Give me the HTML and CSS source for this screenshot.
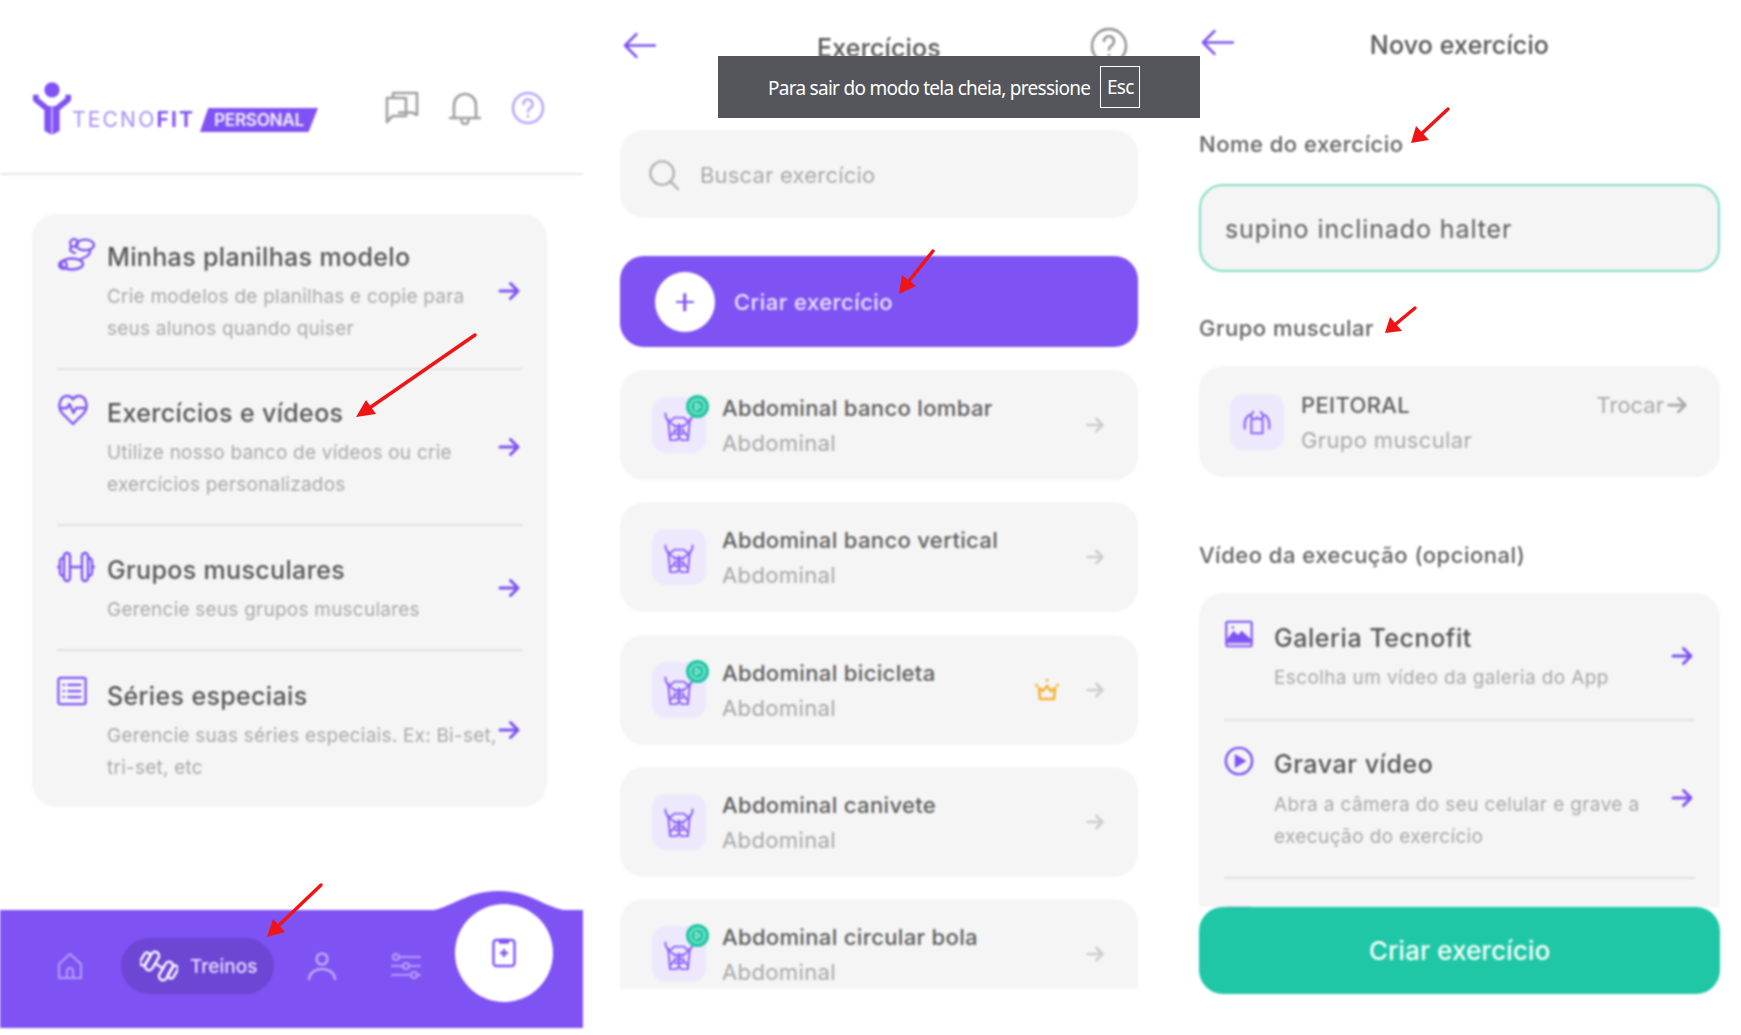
FILE: index.html
```html
<!DOCTYPE html>
<html lang="pt-BR">
<head>
  <meta charset="UTF-8">
  <title>Tecnofit Personal - Exercícios</title>
  <link rel="stylesheet" href="styles.css">
</head>
<body>

  <!-- Ícones repetidos -->
  <svg class="sprite" xmlns="http://www.w3.org/2000/svg">
    <symbol id="i-seta" viewBox="0 0 24 24">
      <path d="M3 12h18M13.500 4.500 21 12l-7.500 7.500" fill="none" stroke="currentColor" stroke-width="3" stroke-linecap="round" stroke-linejoin="round"/>
    </symbol>
    <symbol id="i-abdomen" viewBox="0 0 32 32">
      <g fill="none" stroke="currentColor" stroke-width="2.100" stroke-linecap="round" stroke-linejoin="round">
        <path d="M1.500 1.500c0 4 1.500 7 4.500 9M30.500 1.500c0 4-1.500 7-4.500 9"/>
        <path d="M6 10.500 11 6h10l5 4.500M4.500 8 6.500 30h7l2.500-3 2.500 3h7L27.500 8"/>
        <path d="M7 12l9 5 9-5M6.500 26l5.500-6M25.500 26 20 20M16 13v13M11 15.500h10M11 19.500h10M12 23.500h8"/>
      </g>
    </symbol>
    <symbol id="i-play" viewBox="0 0 24 24">
      <circle cx="12" cy="12" r="12" fill="#22c7a5"/>
      <circle cx="12" cy="12" r="7.500" fill="none" stroke="#b7eee0" stroke-width="1.300"/>
      <path d="M10 8.500l5 3.500-5 3.500z" fill="none" stroke="#b7eee0" stroke-width="1.300" stroke-linejoin="round"/>
    </symbol>
  </svg>

  <div class="page">

    <!-- Menu -->
    <section class="panel panel-menu">
      <header class="topo">
        <div class="logo">
          <svg class="logo-figura" viewBox="0 0 42 56">
            <circle cx="21" cy="9" r="8" fill="#7f52f3"/>
            <path d="M4 14v5l11 9" fill="none" stroke="#7f52f3" stroke-width="6" stroke-linejoin="round"/>
            <path d="M38 14v5l-11 9" fill="none" stroke="#7f52f3" stroke-width="6" stroke-linejoin="round"/>
            <path d="M13 26h7.500v30L13 52zM21.500 26H29v26l-7.500 4z" fill="#7f52f3"/>
          </svg>
          <span class="logo-nome">TECNO<b>FIT</b></span>
          <span class="logo-selo">PERSONAL</span>
        </div>
        <div class="topo-acoes">
          <svg class="topo-icone" viewBox="0 0 34 34" fill="none" stroke="#a0a0a0" stroke-width="2.600" stroke-linejoin="round">
            <path d="M8 7V2h24v22l-5-2.500H13"/>
            <path d="M2 7h19v18H7.500L2 31z"/>
          </svg>
          <svg class="topo-icone" viewBox="0 0 34 34" fill="none" stroke="#a0a0a0" stroke-width="2.600" stroke-linecap="round" stroke-linejoin="round">
            <path d="M6 26V14a11 11 0 0 1 22 0v12"/>
            <path d="M2 27h30M13.500 29.500a3.500 3.500 0 0 0 7 0"/>
          </svg>
          <svg class="topo-icone" viewBox="0 0 34 34" fill="none" stroke="#bba6f8" stroke-width="2.600" stroke-linecap="round">
            <circle cx="17" cy="17" r="15"/>
            <path d="M12.500 13a4.500 4.500 0 1 1 6.500 4c-1.500.8-2 1.800-2 3.500M17 25v.5"/>
          </svg>
        </div>
      </header>

      <div class="card opcoes">
        <a class="opcao">
          <svg class="opcao-icone" viewBox="0 0 38 34" fill="none" stroke="#7f52f3" stroke-width="2.300" stroke-linecap="round">
            <circle cx="17" cy="6" r="3.800"/>
            <ellipse cx="28" cy="8" rx="9" ry="5.300"/>
            <circle cx="6" cy="28" r="3.800"/>
            <ellipse cx="15" cy="27" rx="11" ry="5.500"/>
            <path d="M33 13c1 5-4 7-9 9M14 10c-2 3 0 5 4 6"/>
          </svg>
          <div class="opcao-texto">
            <h3>Minhas planilhas modelo</h3>
            <p>Crie modelos de planilhas e copie para seus alunos quando quiser</p>
          </div>
          <svg class="seta seta-roxa"><use href="#i-seta"/></svg>
        </a>
        <a class="opcao">
          <svg class="opcao-icone" viewBox="0 0 38 34" fill="none" stroke="#7f52f3" stroke-width="2.400" stroke-linecap="round" stroke-linejoin="round">
            <path d="M15 31 4 20C-1 14 2 3 9 3c3 0 5 1.500 6 3.500C16 4.500 18 3 21 3c7 0 10 11 5 17z" transform="translate(1)"/>
            <path d="M3 15h7l2.500-4 4 9 2.500-5h9"/>
          </svg>
          <div class="opcao-texto">
            <h3>Exercícios e vídeos</h3>
            <p>Utilize nosso banco de vídeos ou crie exercícios personalizados</p>
          </div>
          <svg class="seta seta-roxa"><use href="#i-seta"/></svg>
        </a>
        <a class="opcao opcao-curta">
          <svg class="opcao-icone" viewBox="0 0 38 34" fill="none" stroke="#7f52f3" stroke-width="2.400" stroke-linecap="round" stroke-linejoin="round">
            <rect x="7" y="3" width="6" height="28" rx="3"/>
            <rect x="25" y="3" width="6" height="28" rx="3"/>
            <path d="M13 17h12M7 8C3 8 3 10 3 12v10c0 2 0 4 4 4M31 8c4 0 4 2 4 4v10c0 2 0 4-4 4M1 17h2M35 17h2"/>
          </svg>
          <div class="opcao-texto">
            <h3>Grupos musculares</h3>
            <p>Gerencie seus grupos musculares</p>
          </div>
          <svg class="seta seta-roxa"><use href="#i-seta"/></svg>
        </a>
        <a class="opcao">
          <svg class="opcao-icone icone-menor" viewBox="0 0 32 32" fill="none" stroke="#7f52f3" stroke-width="2.400" stroke-linecap="round">
            <rect x="1.500" y="2" width="29" height="28" rx="2"/>
            <path d="M12 9.500h13M12 16h13M12 22.500h13M7 9.500h.5M7 16h.5M7 22.500h.5"/>
          </svg>
          <div class="opcao-texto">
            <h3>Séries especiais</h3>
            <p>Gerencie suas séries especiais. Ex: Bi-set, tri-set, etc</p>
          </div>
          <svg class="seta seta-roxa"><use href="#i-seta"/></svg>
        </a>
      </div>

      <nav class="menu-baixo">
        <svg class="menu-onda" viewBox="0 0 170 22" preserveAspectRatio="none">
          <path d="M0 22C35 22 45 1 84 1c38 0 46 21 86 21z" fill="#7f52f3"/>
        </svg>
        <svg class="menu-icone" viewBox="0 0 28 28" fill="none" stroke="#b49ef8" stroke-width="2" stroke-linejoin="round">
          <path d="M3 12 14 2l11 10v14H3zM11 26v-7a3 3 0 0 1 6 0v7"/>
        </svg>
        <div class="menu-ativo">
          <svg class="menu-halter" viewBox="0 0 38 32" fill="none" stroke="#fff" stroke-width="2.400" stroke-linejoin="round">
            <rect x="8" y="1" width="8" height="20" rx="4" transform="rotate(30 12 11)"/>
            <rect x="2" y="2" width="6" height="14" rx="3" transform="rotate(30 5 9)"/>
            <rect x="22" y="11" width="8" height="20" rx="4" transform="rotate(30 26 21)"/>
            <rect x="30" y="15" width="6" height="14" rx="3" transform="rotate(30 33 22)"/>
            <path d="M16 14l8 5"/>
          </svg>
          <span>Treinos</span>
        </div>
        <svg class="menu-icone" viewBox="0 0 28 28" fill="none" stroke="#c5b5fa" stroke-width="2.200" stroke-linecap="round">
          <circle cx="14" cy="7" r="5.500"/>
          <path d="M1 28c0-7 6-11 13-11s13 4 13 11"/>
        </svg>
        <svg class="menu-icone menu-ajustes" viewBox="0 0 30 28" fill="none" stroke="#b49ef8" stroke-width="2.200" stroke-linecap="round">
          <path d="M9 5h20M1 14h11M18 14h11M1 23h19M26 23h3"/>
          <circle cx="5" cy="5" r="3"/><circle cx="15" cy="14" r="3"/><circle cx="23" cy="23" r="3"/>
        </svg>
        <div class="menu-circulo">
          <svg class="menu-prancheta" viewBox="0 0 24 30" fill="none" stroke="#7f52f3" stroke-width="2.400" stroke-linejoin="round">
            <rect x="1.500" y="2" width="21" height="26" rx="3"/>
            <path d="M8 2h8v2.500H8zM12 11v8M8 15h8"/>
          </svg>
        </div>
      </nav>
    </section>

    <!-- Lista de exercícios -->
    <section class="panel panel-lista">
      <header class="barra barra-lista">
        <svg class="voltar" viewBox="0 0 32 26"><path d="M31 13H2M13 2 2 13l11 11" fill="none" stroke="#7f52f3" stroke-width="2.600" stroke-linecap="round" stroke-linejoin="round"/></svg>
        <h2>Exercícios</h2>
        <svg class="ajuda" viewBox="0 0 38 38" fill="none" stroke="#8f8f8f" stroke-width="2.400" stroke-linecap="round">
          <circle cx="19" cy="19" r="17"/>
          <path d="M14 14a5 5 0 1 1 7.500 4.500C20 19.500 19 20.500 19 22.500M19 28v.5"/>
        </svg>
      </header>

      <div class="busca">
        <svg class="busca-icone" viewBox="0 0 34 34" fill="none" stroke="#b4b4b4" stroke-width="2.600" stroke-linecap="round">
          <circle cx="15" cy="15" r="12.500"/><path d="M24 24l8 8"/>
        </svg>
        <span>Buscar exercício</span>
      </div>

      <div class="criar">
        <span class="criar-mais"></span>
        <span>Criar exercício</span>
      </div>

      <div class="lista">
        <div class="item">
          <div class="item-icone">
            <svg class="abdomen"><use href="#i-abdomen"/></svg>
            <svg class="selo-play"><use href="#i-play"/></svg>
          </div>
          <div class="item-texto"><h4>Abdominal banco lombar</h4><p>Abdominal</p></div>
          <svg class="seta seta-cinza"><use href="#i-seta"/></svg>
        </div>
        <div class="item">
          <div class="item-icone">
            <svg class="abdomen"><use href="#i-abdomen"/></svg>
          </div>
          <div class="item-texto"><h4>Abdominal banco vertical</h4><p>Abdominal</p></div>
          <svg class="seta seta-cinza"><use href="#i-seta"/></svg>
        </div>
        <div class="item">
          <div class="item-icone">
            <svg class="abdomen"><use href="#i-abdomen"/></svg>
            <svg class="selo-play"><use href="#i-play"/></svg>
          </div>
          <div class="item-texto"><h4>Abdominal bicicleta</h4><p>Abdominal</p></div>
          <svg class="coroa" viewBox="0 0 24 22" fill="none" stroke="#f7b233" stroke-width="2.600" stroke-linejoin="round">
            <path d="M4 9l4 3 4-5 4 5 4-3-1 11H5z"/>
            <path d="M12 1v.8M1.500 6v.8M22.500 6v.8" stroke-linecap="round"/>
          </svg>
          <svg class="seta seta-cinza"><use href="#i-seta"/></svg>
        </div>
        <div class="item">
          <div class="item-icone">
            <svg class="abdomen"><use href="#i-abdomen"/></svg>
          </div>
          <div class="item-texto"><h4>Abdominal canivete</h4><p>Abdominal</p></div>
          <svg class="seta seta-cinza"><use href="#i-seta"/></svg>
        </div>
        <div class="item">
          <div class="item-icone">
            <svg class="abdomen"><use href="#i-abdomen"/></svg>
            <svg class="selo-play"><use href="#i-play"/></svg>
          </div>
          <div class="item-texto"><h4>Abdominal circular bola</h4><p>Abdominal</p></div>
          <svg class="seta seta-cinza"><use href="#i-seta"/></svg>
        </div>
      </div>
    </section>

    <!-- Novo exercício -->
    <section class="panel panel-novo">
      <header class="barra barra-novo">
        <svg class="voltar" viewBox="0 0 32 26"><path d="M31 13H2M13 2 2 13l11 11" fill="none" stroke="#7f52f3" stroke-width="2.600" stroke-linecap="round" stroke-linejoin="round"/></svg>
        <h2>Novo exercício</h2>
      </header>

      <label class="rotulo rotulo-nome">Nome do exercício</label>
      <div class="campo">supino inclinado halter</div>

      <label class="rotulo rotulo-grupo">Grupo muscular</label>
      <div class="grupo">
        <div class="item-icone">
          <svg class="peitoral" viewBox="0 0 32 32" fill="none" stroke="#8a63f5" stroke-width="2.200" stroke-linecap="round" stroke-linejoin="round">
            <path d="M3 22C2 13 5 8 10 7l2-3M29 22c1-9-2-14-7-15l-2-3"/>
            <path d="M9 8c2 5 5 5 7 2 2 3 5 3 7-2M10 13v14h12V13"/>
          </svg>
        </div>
        <div class="item-texto"><h4>PEITORAL</h4><p>Grupo muscular</p></div>
        <div class="trocar">Trocar<svg class="seta seta-trocar"><use href="#i-seta"/></svg></div>
      </div>

      <label class="rotulo rotulo-video">Vídeo da execução (opcional)</label>
      <div class="card opcoes opcoes-video">
        <a class="opcao">
          <svg class="opcao-icone icone-menor" viewBox="0 0 32 32" fill="none" stroke="#7f52f3" stroke-width="2.400">
            <rect x="1.500" y="2" width="29" height="28" rx="1.500"/>
            <path d="M3 23l7-9 5 5 4-5 10 9z" fill="#7f52f3"/>
            <path d="M2 25.500h28"/>
            <circle cx="9" cy="8.500" r="1.400" fill="#7f52f3" stroke="none"/>
          </svg>
          <div class="opcao-texto">
            <h3>Galeria Tecnofit</h3>
            <p>Escolha um vídeo da galeria do App</p>
          </div>
          <svg class="seta seta-roxa"><use href="#i-seta"/></svg>
        </a>
        <a class="opcao opcao-gravar">
          <svg class="opcao-icone icone-menor" viewBox="0 0 32 32">
            <circle cx="16" cy="16" r="14" fill="none" stroke="#7f52f3" stroke-width="2.600"/>
            <path d="M11.500 8.500 24 16l-12.500 7.500z" fill="#7f52f3"/>
          </svg>
          <div class="opcao-texto">
            <h3>Gravar vídeo</h3>
            <p>Abra a câmera do seu celular e grave a execução do exercício</p>
          </div>
          <svg class="seta seta-roxa"><use href="#i-seta"/></svg>
        </a>
        <a class="opcao">
          <svg class="opcao-icone icone-menor" viewBox="0 0 32 32" fill="none" stroke="#7f52f3" stroke-width="2.400">
            <rect x="1.500" y="2" width="29" height="28" rx="1.500"/>
          </svg>
        </a>
      </div>
      <div class="botao-criar">Criar exercício</div>
    </section>

    <!-- Aviso de tela cheia -->
    <div class="aviso">
      <span>Para sair do modo tela cheia, pressione</span>
      <kbd>Esc</kbd>
    </div>

    <!-- Setas vermelhas de anotação -->
    <svg class="anotacoes" viewBox="0 0 1741 1035">
      <g fill="none" stroke="#f01414" stroke-width="3.500" stroke-linecap="round">
        <path d="M475 335 368 409"/>
        <path d="M321 885 275 929"/>
        <path d="M933 251 905 286"/>
        <path d="M1448 109 1418 137"/>
        <path d="M1415 308 1391 328"/>
      </g>
      <g fill="#f01414">
        <path d="M356 417 366 400 376 414z"/>
        <path d="M267 937 273 919 285 932z"/>
        <path d="M899 294 902 275 916 286z"/>
        <path d="M1411 143 1416 126 1429 140z"/>
        <path d="M1385 333 1390 317 1402 331z"/>
      </g>
    </svg>
  </div>

</body>
</html>
```

FILE: styles.css
```css
* {
  box-sizing: border-box;
}

body {
  margin: 0;
  background-color: #ffffff;
  font-family: Inter, "Noto Sans", sans-serif;
  color: #565656;
  overflow: hidden;
}

h2, h3, h4, p {
  margin: 0;
}

.sprite {
  display: none;
}

.page {
  position: relative;
  display: flex;
  width: 1741px;
  height: 1035px;
  overflow: hidden;
}

.panel {
  display: flex;
  flex-direction: column;
  filter: blur(0.8px);
}

/* Painel 1 */
.panel-menu {
  width: 583px;
  height: 1028px;
}

.panel-lista {
  width: 518px;
  margin-left: 37px;
}

.panel-novo {
  width: 521px;
  margin-left: 61px;
}

.topo {
  display: flex;
  justify-content: space-between;
  align-items: flex-start;
  height: 175px;
  padding: 81px 38px 0 32px;
  border-bottom: 2px solid #e8e8e8;
}

.logo {
  display: flex;
  align-items: flex-end;
  height: 54px;
}

.logo-figura {
  width: 40px;
  height: 54px;
}

.logo-nome {
  width: 128px;
  margin-bottom: 3px;
  font-size: 21px;
  line-height: 25px;
  letter-spacing: 2.2px;
  color: #a68bf6;
}

.logo-nome b {
  color: #7f52f3;
  font-weight: 700;
}

.logo-selo {
  width: 118px;
  height: 24px;
  margin-bottom: 3px;
  background-color: #7f52f3;
  clip-path: polygon(7% 0, 100% 0, 92% 100%, 0 100%);
  color: #f1edff;
  font-size: 17px;
  font-weight: 600;
  line-height: 24px;
  letter-spacing: -0.2px;
  text-align: center;
}

.topo-acoes {
  display: flex;
  gap: 29px;
  margin-top: 10px;
}

.topo-icone {
  width: 34px;
  height: 34px;
}

.card {
  background-color: #f5f5f5;
  border-radius: 24px;
}

.opcoes {
  margin: 39px 36px 0 32px;
  padding: 0 25px;
}

.opcao {
  display: grid;
  grid-template-columns: 50px 1fr 25px;
  padding: 26px 0 23px;
  border-bottom: 2px solid #e0e0e0;
}

.opcao:last-child {
  padding-top: 28px;
  border-bottom: none;
}

.opcao-curta {
  padding: 27px 0 23px;
}

.opcao-curta h3 {
  margin-bottom: 8px;
}

.opcao-icone {
  width: 38px;
  height: 34px;
  margin-top: -3px;
}

.icone-menor {
  width: 30px;
  height: 30px;
}

.opcao-texto h3 {
  font-size: 25px;
  font-weight: 500;
  line-height: 34px;
  letter-spacing: 0.35px;
  margin-bottom: 7px;
}

.opcao-texto p {
  font-size: 19px;
  line-height: 32px;
  letter-spacing: 0.23px;
  color: #a8a8a8;
}

.seta {
  width: 24px;
  height: 24px;
  align-self: center;
}

.seta-roxa {
  margin-bottom: 4px;
  color: #7f52f3;
}

.seta-cinza {
  width: 20px;
  height: 20px;
  color: #cdcdcd;
}

.menu-baixo {
  position: relative;
  display: flex;
  align-items: center;
  gap: 34px;
  height: 118px;
  margin-top: auto;
  padding: 0 0 6px 56px;
  background-color: #7f52f3;
}

.menu-onda {
  position: absolute;
  right: 0;
  top: -20px;
  width: 166px;
  height: 22px;
}

.menu-icone {
  width: 28px;
  height: 28px;
}

.menu-ajustes {
  width: 30px;
  margin-left: 21px;
}

.menu-ativo {
  display: flex;
  align-items: center;
  gap: 12px;
  width: 153px;
  height: 56px;
  margin-left: 3px;
  padding-left: 19px;
  background-color: #6d46d4;
  border-radius: 28px;
  color: #e6deff;
  font-size: 19px;
  font-weight: 500;
}

.menu-halter {
  width: 38px;
  height: 32px;
}

.menu-circulo {
  position: absolute;
  left: 455px;
  top: -6px;
  display: flex;
  justify-content: center;
  align-items: center;
  width: 98px;
  height: 98px;
  background-color: #ffffff;
  border-radius: 50%;
}

.menu-prancheta {
  width: 24px;
  height: 30px;
}

/* Cabeçalho dos painéis 2 e 3 */
.barra {
  position: relative;
  display: flex;
  align-items: center;
  justify-content: center;
}

.barra h2 {
  font-size: 25px;
  font-weight: 500;
  letter-spacing: 0.15px;
}

.barra-lista {
  height: 96px;
}

.barra-novo {
  height: 90px;
}

.voltar {
  position: absolute;
  left: 3px;
  top: 32px;
  width: 33px;
  height: 27px;
}

.barra-novo .voltar {
  top: 29px;
  left: 2px;
}

.ajuda {
  position: absolute;
  right: 10px;
  top: 27px;
  width: 38px;
  height: 38px;
}

/* Painel 2 */
.busca {
  display: flex;
  align-items: center;
  gap: 20px;
  height: 88px;
  margin-top: 34px;
  padding: 2px 0 0 28px;
  background-color: #f5f5f5;
  border-radius: 24px;
  color: #a8a8a8;
  font-size: 22px;
  letter-spacing: 0.2px;
}

.busca-icone {
  width: 32px;
  height: 32px;
}

.criar {
  display: flex;
  align-items: center;
  gap: 19px;
  height: 91px;
  margin-top: 38px;
  padding-left: 35px;
  background-color: #7f52f3;
  border-radius: 24px;
  color: #ece6ff;
  font-size: 22px;
  font-weight: 500;
  letter-spacing: 0.45px;
}

.criar-mais {
  position: relative;
  width: 60px;
  height: 60px;
  background-color: #ffffff;
  border-radius: 50%;
}

/* cruz do botão */
.criar-mais::before,
.criar-mais::after {
  content: "";
  position: absolute;
  left: 21px;
  top: 29px;
  width: 18px;
  height: 2.500px;
  background-color: #7f52f3;
}

.criar-mais::after {
  transform: rotate(90deg);
}

.lista {
  display: flex;
  flex-direction: column;
  gap: 22.3px;
  height: 619px;
  margin-top: 23px;
  overflow: hidden;
  flex-shrink: 0;
}

.item {
  display: flex;
  align-items: center;
  flex-shrink: 0;
  height: 110px;
  padding: 0 33px 0 32px;
  background-color: #f5f5f5;
  border-radius: 24px;
}

.item-icone {
  position: relative;
  display: flex;
  justify-content: center;
  align-items: center;
  width: 54px;
  height: 56px;
  margin-right: 16px;
  padding-top: 3px;
  background-color: #eee8fd;
  border-radius: 14px;
  color: #8a5ff5;
}

.abdomen {
  width: 30px;
  height: 30px;
}

.selo-play {
  position: absolute;
  right: -3px;
  top: -2px;
  width: 23px;
  height: 23px;
}

.item-texto {
  flex: 1;
}

.item-texto h4 {
  margin: 1px 0 3px;
  font-size: 22px;
  font-weight: 500;
  line-height: 32px;
  letter-spacing: 0.35px;
  color: #5f5f5f;
}

.item-texto p {
  font-size: 22px;
  line-height: 32px;
  letter-spacing: 0.37px;
  color: #a8a8a8;
}

.coroa {
  width: 24px;
  height: 22px;
  margin-right: 26px;
}

/* Painel 3 */
.rotulo {
  display: block;
  font-size: 22px;
  font-weight: 500;
  line-height: 24px;
  letter-spacing: 0.5px;
  color: #626262;
}

.rotulo-nome {
  margin-top: 42px;
}

.rotulo-grupo {
  margin-top: 44px;
}

.rotulo-video {
  margin-top: 66px;
}

.campo {
  height: 88px;
  margin-top: 28px;
  padding-left: 24px;
  background-color: #f5f5f5;
  border: 2.500px solid #7fdcc7;
  border-radius: 24px;
  color: #5f5f5f;
  font-size: 25px;
  line-height: 86px;
  letter-spacing: 0.9px;
}

.grupo {
  display: flex;
  align-items: center;
  height: 111px;
  margin-top: 26px;
  padding: 0 32px 0 31px;
  background-color: #f5f5f5;
  border-radius: 24px;
}

.grupo .item-icone {
  margin-right: 17px;
}

.peitoral {
  width: 30px;
  height: 30px;
}

.trocar {
  display: flex;
  align-items: center;
  align-self: flex-start;
  margin-top: 26px;
  color: #a8a8a8;
  font-size: 22px;
}

.seta-trocar {
  width: 22px;
  height: 22px;
  margin-left: 2px;
  color: #a8a8a8;
}

.opcoes-video {
  height: 314px;
  margin: 26px 0 0;
  overflow: hidden;
  border-radius: 24px 24px 0 0;
}

.opcoes-video .opcao {
  padding: 28px 0 25px;
}

.opcoes-video .opcao-icone {
  width: 28px;
  height: 28px;
  margin: -1px 0 0 1px;
}

.opcoes-video h3 {
  letter-spacing: 0.55px;
}

.opcoes-video p {
  letter-spacing: 0.38px;
}

.opcoes-video .opcao-gravar {
  padding: 26px 0 24px;
}

.opcoes-video .opcao-gravar h3 {
  margin-bottom: 8px;
}

.opcoes-video .opcao-gravar .opcao-icone {
  width: 30px;
  height: 30px;
  margin: -1px 0 0;
}

.botao-criar {
  height: 87px;
  background-color: #1fc7a6;
  border-radius: 24px;
  color: #f2fdfa;
  font-size: 26px;
  font-weight: 500;
  line-height: 87px;
  text-align: center;
  letter-spacing: 0.1px;
}

/* Sobreposições */
.aviso {
  position: absolute;
  left: 718px;
  top: 56px;
  display: flex;
  align-items: center;
  gap: 10px;
  width: 482px;
  height: 62px;
  padding-left: 50px;
  background-color: #54565b;
  color: #ffffff;
  font-family: "Noto Sans", sans-serif;
  font-size: 19px;
  letter-spacing: -0.72px;
}

.aviso span {
  padding-top: 2px;
}

.aviso kbd {
  width: 40px;
  height: 42px;
  border: 1px solid #ffffff;
  font-family: inherit;
  line-height: 40px;
  text-align: center;
}

.anotacoes {
  position: absolute;
  left: 0;
  top: 0;
  width: 1741px;
  height: 1035px;
}
```
